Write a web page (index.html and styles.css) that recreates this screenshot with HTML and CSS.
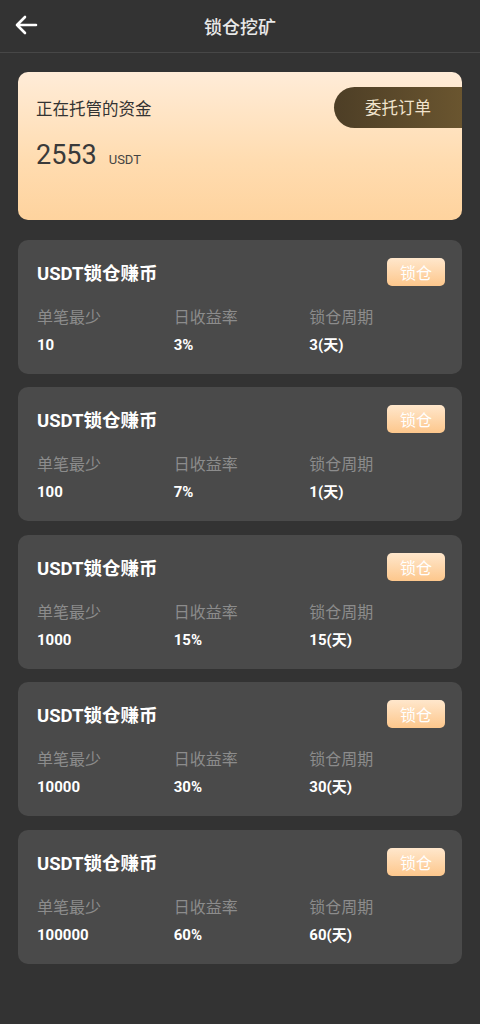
FILE: index.html
```html
<!DOCTYPE html>
<html lang="zh-CN">
<head>
    <meta charset="UTF-8">
    <meta name="viewport" content="width=device-width, initial-scale=1.0">
    <title>锁仓挖矿</title>
    <link rel="stylesheet" href="styles.css">
</head>
<body>
    <div class="header">
        <svg class="back" width="24" height="20" viewBox="0 0 24 20">
            <path d="M22 10H3M11 2L3 10l8 8" fill="none" stroke="#fff" stroke-width="2.6" stroke-linecap="round" stroke-linejoin="round"/>
        </svg>
        <h1>锁仓挖矿</h1>
    </div>
    <div class="container">
        <div class="fund">
            <div class="fund-label">正在托管的资金</div>
            <div class="fund-value">2553<span class="unit">USDT</span></div>
            <a class="order-btn">委托订单</a>
        </div>

        <div class="card">
            <div class="card-top">
                <span class="card-title">USDT锁仓赚币</span>
                <a class="lock-btn">锁仓</a>
            </div>
            <div class="stats">
                <div class="stat"><span class="stat-label">单笔最少</span><span class="stat-value">10</span></div>
                <div class="stat"><span class="stat-label">日收益率</span><span class="stat-value">3%</span></div>
                <div class="stat"><span class="stat-label">锁仓周期</span><span class="stat-value">3(天)</span></div>
            </div>
        </div>
        <div class="card">
            <div class="card-top">
                <span class="card-title">USDT锁仓赚币</span>
                <a class="lock-btn">锁仓</a>
            </div>
            <div class="stats">
                <div class="stat"><span class="stat-label">单笔最少</span><span class="stat-value">100</span></div>
                <div class="stat"><span class="stat-label">日收益率</span><span class="stat-value">7%</span></div>
                <div class="stat"><span class="stat-label">锁仓周期</span><span class="stat-value">1(天)</span></div>
            </div>
        </div>
        <div class="card">
            <div class="card-top">
                <span class="card-title">USDT锁仓赚币</span>
                <a class="lock-btn">锁仓</a>
            </div>
            <div class="stats">
                <div class="stat"><span class="stat-label">单笔最少</span><span class="stat-value">1000</span></div>
                <div class="stat"><span class="stat-label">日收益率</span><span class="stat-value">15%</span></div>
                <div class="stat"><span class="stat-label">锁仓周期</span><span class="stat-value">15(天)</span></div>
            </div>
        </div>
        <div class="card">
            <div class="card-top">
                <span class="card-title">USDT锁仓赚币</span>
                <a class="lock-btn">锁仓</a>
            </div>
            <div class="stats">
                <div class="stat"><span class="stat-label">单笔最少</span><span class="stat-value">10000</span></div>
                <div class="stat"><span class="stat-label">日收益率</span><span class="stat-value">30%</span></div>
                <div class="stat"><span class="stat-label">锁仓周期</span><span class="stat-value">30(天)</span></div>
            </div>
        </div>
        <div class="card">
            <div class="card-top">
                <span class="card-title">USDT锁仓赚币</span>
                <a class="lock-btn">锁仓</a>
            </div>
            <div class="stats">
                <div class="stat"><span class="stat-label">单笔最少</span><span class="stat-value">100000</span></div>
                <div class="stat"><span class="stat-label">日收益率</span><span class="stat-value">60%</span></div>
                <div class="stat"><span class="stat-label">锁仓周期</span><span class="stat-value">60(天)</span></div>
            </div>
        </div>
    </div>
</body>
</html>
```

FILE: styles.css
```css
body {
    font-family: Roboto, "Noto Sans CJK SC", sans-serif;
    margin: 0;
    padding: 0;
    background-color: #333333;
    color: #fff;
    min-height: 1024px;
}

.header {
    height: 52px;
    display: flex;
    align-items: center;
    justify-content: center;
    position: relative;
    border-bottom: 1px solid #474747;
}

.header h1 {
    margin: 0;
    font-size: 18px;
    font-weight: 500;
    color: #e8e8e8;
}

.back {
    position: absolute;
    left: 14px;
    top: 15px;
}

.container {
    padding: 19px 18px 20px 18px;
    display: flex;
    flex-direction: column;
    gap: 13.5px;
}

.fund {
    height: 148px;
    margin-bottom: 6px;
    border-radius: 10px;
    background: linear-gradient(180deg, #ffecd8 0%, #ffdcb0 60%, #fed39e 100%);
    position: relative;
    padding: 23px 18px 0 18px;
    box-sizing: border-box;
    color: #333;
}

.fund-label {
    font-size: 16.5px;
    line-height: 26px;
    font-family: "Noto Sans CJK SC", sans-serif;
}

.fund-value {
    margin-top: 18px;
    font-size: 27px;
    line-height: 32px;
    color: #3a3a3a;
}

.unit {
    font-size: 13px;
    margin-left: 12px;
    color: #444;
}

.order-btn {
    position: absolute;
    right: 0;
    top: 15px;
    width: 128px;
    height: 41px;
    line-height: 41px;
    text-align: center;
    font-size: 16.5px;
    color: #f1e3cd;
    border-radius: 21px 0 0 21px;
    background: linear-gradient(90deg, #4d3e26 0%, #6a552f 100%);
    font-family: "Noto Sans CJK SC", sans-serif;
}

.card {
    height: 134px;
    box-sizing: border-box;
    background-color: #4a4a4a;
    border-radius: 10px;
    padding: 18px 17px 0 19px;
}

.card-top {
    display: flex;
    justify-content: space-between;
    align-items: center;
    height: 28px;
}

.card-title {
    font-size: 18.5px;
    font-weight: bold;
    color: #fff;
}

.lock-btn {
    width: 58px;
    height: 28px;
    line-height: 28px;
    text-align: center;
    border-radius: 5px;
    font-size: 16px;
    color: #fff;
    background: linear-gradient(180deg, #ffe7cc 0%, #fdc78c 100%);
    font-family: "Noto Sans CJK SC", sans-serif;
}

.stats {
    display: flex;
    margin-top: 21px;
}

.stat {
    display: flex;
    flex-direction: column;
    width: 136px;
}

.stat:first-child {
    width: 137px;
}

.stat-label {
    font-size: 16px;
    line-height: 22px;
    color: #8c8c8c;
}

.stat-value {
    margin-top: 6px;
    font-size: 15px;
    font-weight: bold;
    line-height: 20px;
    color: #fff;
}
```
